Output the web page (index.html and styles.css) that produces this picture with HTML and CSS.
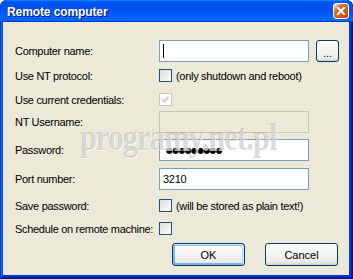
FILE: index.html
```html
<!DOCTYPE html>
<html>
<head>
<meta charset="utf-8">
<link rel="stylesheet" href="styles.css">
</head>
<body>
<div class="window">
  <div class="titlebar">
    <span class="title">Remote computer</span>
    <span class="close"><svg width="14" height="14" viewBox="0 0 14 14"><path d="M4 4 L10 10 M10 4 L4 10" stroke="#fff" stroke-width="2" stroke-linecap="square"/></svg></span>
  </div>
  <div class="client">
    <div class="form">
      <div class="row">
        <span class="label">Computer name:</span>
        <div class="edit"><span class="caret"></span></div>
        <span class="btn browse">...</span>
      </div>
      <div class="row check r2">
        <span class="label">Use NT protocol:</span>
        <span class="box"></span>
        <span class="note">(only shutdown and reboot)</span>
      </div>
      <div class="row check r3">
        <span class="label">Use current credentials:</span>
        <span class="box disabled"><svg width="11" height="11" viewBox="0 0 11 11"><path d="M2 4.5 L4 6.5 L8.5 2 M2 5.5 L4 7.5 L8.5 3 M2 6.5 L4 8.5 L8.5 4" stroke="#c9c7ba" stroke-width="1" fill="none"/></svg></span>
      </div>
      <div class="row r4">
        <span class="label">NT Username:</span>
        <div class="edit disabled"></div>
      </div>
      <div class="row r5">
        <span class="label">Password:</span>
        <div class="edit"><span class="dots">●●●●●●●●●</span></div>
      </div>
      <div class="row r6">
        <span class="label">Port number:</span>
        <div class="edit"><span class="value">3210</span></div>
      </div>
      <div class="row check r7">
        <span class="label">Save password:</span>
        <span class="box"></span>
        <span class="note">(will be stored as plain text!)</span>
      </div>
      <div class="row check r8">
        <span class="label">Schedule on remote machine:</span>
        <span class="box"></span>
      </div>
    </div>
    <div class="buttons">
      <span class="btn push default">OK</span>
      <span class="btn push">Cancel</span>
    </div>
    <div class="watermark">programy.net.pl</div>
  </div>
</div>
</body>
</html>
```

FILE: styles.css
```css
html, body {
  margin: 0;
  padding: 0;
  background: #ffffff;
}

.window {
  width: 353px;
  height: 279px;
  box-sizing: border-box;
  display: flex;
  flex-direction: column;
  background: #0831d9;
  box-shadow: inset -1px -1px #00138c, inset 1px 1px #0831d9, inset -2px -2px #001ea0, inset 2px 2px #166aee, inset -3px -3px #003bda, inset 3px 3px #0855dd;
  border-radius: 7px 7px 0 0;
  overflow: hidden;
  font-family: "Liberation Sans", Arial, sans-serif;
}

.titlebar {
  height: 22px;
  flex: none;
  display: flex;
  align-items: center;
  justify-content: space-between;
  padding: 0 4px 0 7px;
  background: linear-gradient(180deg, #0997ff, #0053ee 8%, #0050ee 40%, #0066ff 88%, #0066ff 93%, #005bff 95%, #003dd7 96%, #003dd7);
  border-radius: 7px 7px 0 0;
}

.title {
  color: #ffffff;
  font-weight: bold;
  font-size: 12px;
  letter-spacing: -0.1px;
  text-shadow: 1px 1px #0f1089;
  padding-top: 1px;
}

.close {
  width: 14px;
  height: 14px;
  border: 1px solid #ffffff;
  border-radius: 3px;
  display: flex;
  background: radial-gradient(circle at 90% 90%, #cc4600 0, #dc6527 55%, #cd7546 70%, #ffccb2 90%, #ffffff 100%);
}

.client {
  flex: 1;
  position: relative;
  margin: 0 4px 4px 3px;
  background: #ece9d8;
  font-size: 11px;
  letter-spacing: -0.3px;
  color: #000000;
}

.form {
  display: flex;
  flex-direction: column;
  padding: 18px 0 0 12px;
}

.row {
  display: flex;
  align-items: center;
  height: 22px;
}

.row.check {
  height: 13px;
}

.r2 { margin-top: 7px; }
.r3 { margin-top: 11px; }
.r4 { margin-top: 5px; }
.r5 { margin-top: 6px; }
.r6 { margin-top: 7px; }
.r7 { margin-top: 9px; }
.r8 { margin-top: 10px; }

.label {
  width: 144px;
  flex: none;
  white-space: nowrap;
}

.edit {
  width: 150px;
  height: 22px;
  box-sizing: border-box;
  border: 1px solid #7f9db9;
  background: #ffffff;
  display: flex;
  align-items: center;
  padding-left: 2px;
}

.edit.disabled {
  border-color: #c9c7ba;
  background: #ece9d8;
}

.caret {
  width: 1px;
  height: 14px;
  background: #000000;
  margin-left: 1px;
}

.dots {
  font-family: "DejaVu Sans", sans-serif;
  font-size: 8px;
  letter-spacing: -0.75px;
  padding-left: 4px;
  color: #000000;
}

.value {
  padding-left: 1px;
}

.box {
  width: 13px;
  height: 13px;
  box-sizing: border-box;
  border: 1px solid #1c5180;
  background: linear-gradient(135deg, #dcdcd7, #ffffff);
  flex: none;
  display: flex;
  align-items: center;
  justify-content: center;
}

.box.disabled {
  border-color: #cac8bb;
  background: #ffffff;
}

.note {
  margin-left: 4px;
  white-space: nowrap;
}

.btn {
  box-sizing: border-box;
  border: 1px solid #003c74;
  border-radius: 3px;
  background: linear-gradient(180deg, #ffffff, #ecebe6 86%, #d6d0c5);
  display: flex;
  align-items: center;
  justify-content: center;
  letter-spacing: 0;
}

.browse {
  width: 23px;
  height: 22px;
  margin-left: 7px;
  padding-top: 4px;
}

.buttons {
  display: flex;
  justify-content: flex-end;
  gap: 20px;
  margin: 8px 11px 0 0;
}

.push {
  width: 73px;
  height: 23px;
}

.push.default {
  box-shadow: inset -1px 1px #cee7ff, inset 1px 2px #98b8ea, inset -2px 2px #bcd4f6, inset 1px -1px #89ade4, inset 2px -2px #89ade4;
}

.watermark {
  position: absolute;
  left: 77px;
  top: 93px;
  font-family: "Liberation Serif", serif;
  font-weight: bold;
  font-size: 38px;
  letter-spacing: -1px;
  color: rgba(160, 160, 160, 0.4);
  text-shadow: 1px 1px rgba(255, 255, 255, 0.7);
  transform: scaleX(0.8);
  transform-origin: left top;
  pointer-events: none;
  white-space: nowrap;
}
```
